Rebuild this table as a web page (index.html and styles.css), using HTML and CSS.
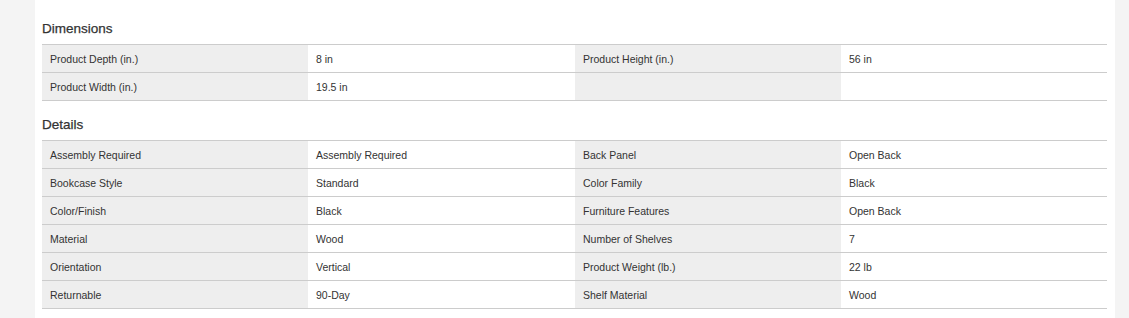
FILE: index.html
```html
<!DOCTYPE html>
<html>
<head>
<meta charset="utf-8">
<link rel="stylesheet" href="styles.css">
</head>
<body>
<div class="page">
  <div class="content">
    <section class="group">
      <h2 class="group-title">Dimensions</h2>
      <div class="specs">
        <div class="row">
          <div class="label">Product Depth (in.)</div><div class="value">8 in</div>
          <div class="label">Product Height (in.)</div><div class="value">56 in</div>
        </div>
        <div class="row">
          <div class="label">Product Width (in.)</div><div class="value">19.5 in</div>
          <div class="label"></div><div class="value"></div>
        </div>
      </div>
    </section>
    <section class="group">
      <h2 class="group-title">Details</h2>
      <div class="specs">
        <div class="row">
          <div class="label">Assembly Required</div><div class="value">Assembly Required</div>
          <div class="label">Back Panel</div><div class="value">Open Back</div>
        </div>
        <div class="row">
          <div class="label">Bookcase Style</div><div class="value">Standard</div>
          <div class="label">Color Family</div><div class="value">Black</div>
        </div>
        <div class="row">
          <div class="label">Color/Finish</div><div class="value">Black</div>
          <div class="label">Furniture Features</div><div class="value">Open Back</div>
        </div>
        <div class="row">
          <div class="label">Material</div><div class="value">Wood</div>
          <div class="label">Number of Shelves</div><div class="value">7</div>
        </div>
        <div class="row">
          <div class="label">Orientation</div><div class="value">Vertical</div>
          <div class="label">Product Weight (lb.)</div><div class="value">22 lb</div>
        </div>
        <div class="row">
          <div class="label">Returnable</div><div class="value">90-Day</div>
          <div class="label">Shelf Material</div><div class="value">Wood</div>
        </div>
      </div>
    </section>
  </div>
</div>
</body>
</html>
```

FILE: styles.css
```css
html, body {
  margin: 0;
  padding: 0;
  background: #f4f4f4;
}
body {
  font-family: "Liberation Sans", Arial, Helvetica, sans-serif;
  color: #333;
}
.page {
  display: flex;
  padding: 0 14px 0 35px;
  min-height: 318px;
}
.content {
  flex: 1;
  background: #fff;
  padding: 5px 8px 10px 7px;
}
.group-title {
  margin: 0;
  padding: 16px 0 7px;
  font-size: 13.5px;
  line-height: 16px;
  font-weight: normal;
  color: #333;
  -webkit-text-stroke: 0.25px #333;
}
.specs {
  border-top: 1px solid #ccc;
}
.row {
  display: grid;
  grid-template-columns: 266px 267px 266px 266px;
  border-bottom: 1px solid #ccc;
}
.label, .value {
  height: 27px;
  line-height: 28px;
  font-size: 10.5px;
  padding: 0 8px;
  white-space: nowrap;
  overflow: hidden;
}
.label {
  background: #eee;
}
.value {
  background: #fff;
}
```
